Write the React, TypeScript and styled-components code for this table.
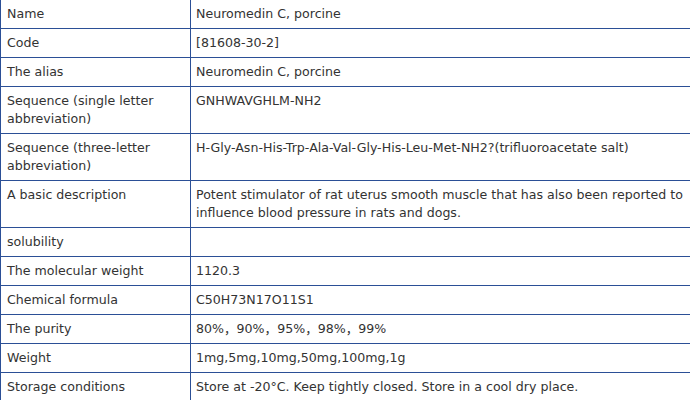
import React from 'react';
import styled, { createGlobalStyle } from 'styled-components';

const GlobalStyle = createGlobalStyle`
  html, body {
    margin: 0;
    padding: 0;
    overflow: hidden;
    background: #fff;
  }
`;

const SpecTable = styled.table`
  width: 696px;
  border-collapse: collapse;
  font-family: "DejaVu Sans", Verdana, "Noto Sans CJK SC", sans-serif;
  font-size: 12.6px;
  line-height: 18px;
  color: #333;

  tr:first-child td {
    border-top: none;
  }
`;

const Label = styled.td`
  width: 178px;
  padding: 5px 5px 5px 6px;
  border: 1px solid #2b4f96;
  vertical-align: top;
`;

const Value = styled.td`
  padding: 5px 5px;
  border: 1px solid #2b4f96;
  vertical-align: top;
`;

type Spec = {
    label: string;
    value: string;
};

const specs: Spec[] = [
    { label: 'Name', value: 'Neuromedin C, porcine' },
    { label: 'Code', value: '[81608-30-2]' },
    { label: 'The alias', value: 'Neuromedin C, porcine' },
    { label: 'Sequence (single letter abbreviation)', value: 'GNHWAVGHLM-NH2' },
    {
        label: 'Sequence (three-letter abbreviation)',
        value: 'H-Gly-Asn-His-Trp-Ala-Val-Gly-His-Leu-Met-NH2?(trifluoroacetate salt)',
    },
    {
        label: 'A basic description',
        value: 'Potent stimulator of rat uterus smooth muscle that has also been reported to influence blood pressure in rats and dogs.',
    },
    { label: 'solubility', value: '' },
    { label: 'The molecular weight', value: '1120.3' },
    { label: 'Chemical formula', value: 'C50H73N17O11S1' },
    { label: 'The purity', value: '80%，90%，95%，98%，99%' },
    { label: 'Weight', value: '1mg,5mg,10mg,50mg,100mg,1g' },
    { label: 'Storage conditions', value: 'Store at -20°C. Keep tightly closed. Store in a cool dry place.' },
];

const App: React.FC = () => {
    return (
        <>
            <GlobalStyle />
            <SpecTable>
                <tbody>
                    {specs.map((spec) => (
                        <tr key={spec.label}>
                            <Label>{spec.label}</Label>
                            <Value>{spec.value}</Value>
                        </tr>
                    ))}
                </tbody>
            </SpecTable>
        </>
    );
};

export default App;
